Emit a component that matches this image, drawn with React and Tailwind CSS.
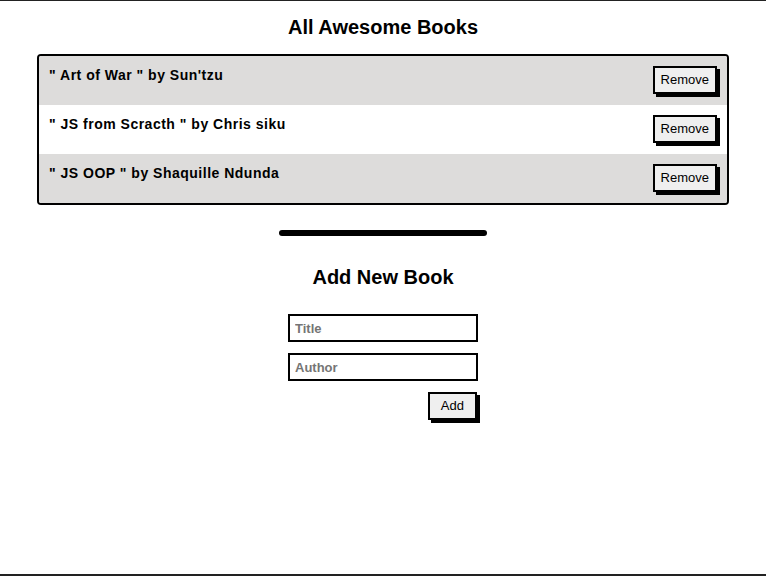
import React from "react";

const books = [
  { title: "Art of War", author: "Sun'tzu" },
  { title: "JS from Scracth", author: "Chris siku" },
  { title: "JS OOP", author: "Shaquille Ndunda" },
];

const BookRow = ({ title, author, index }) => (
  <li
    className={`flex justify-between items-start h-[49px] pl-[10px] pr-[10px] ${
      index % 2 === 0 ? "bg-[#dddcdb]" : "bg-white"
    }`}
  >
    <p className="mt-[11px] text-[14px] leading-[16px] font-bold tracking-[0.5px]">
      " {title} " by {author}
    </p>
    <button className="mt-[10px] border-2 border-black bg-[#efefef] px-[6px] h-[28px] text-[13px] shadow-[3px_3px_0_#000]">
      Remove
    </button>
  </li>
);

export default function App() {
  return (
    <div
      className="min-h-[576px] flex flex-col items-center border-t border-[#222] border-b-2 border-b-[#222] text-black"
      style={{ fontFamily: '"Liberation Sans", Arial, sans-serif' }}
    >
      <h1 className="mt-[14px] text-[20px] leading-[24px] font-bold">
        All Awesome Books
      </h1>
      <ul className="mt-[15px] w-[692px] border-2 border-black rounded-[4px] overflow-hidden">
        {books.map((b, i) => (
          <BookRow key={b.title} {...b} index={i} />
        ))}
      </ul>
      <div className="mt-[25px] w-[208px] h-[6px] rounded-full bg-black" />
      <h2 className="mt-[29px] text-[20px] leading-[24px] font-bold">
        Add New Book
      </h2>
      <form className="mt-[25px] w-[190px] flex flex-col items-end gap-[11px]">
        <input
          placeholder="Title"
          className="w-full h-[28px] border-2 border-black px-[5px] text-[13px] font-bold placeholder:text-[#757575] outline-none"
        />
        <input
          placeholder="Author"
          className="w-full h-[28px] border-2 border-black px-[5px] text-[13px] font-bold placeholder:text-[#757575] outline-none"
        />
        <button
          type="button"
          className="mr-[1px] border-2 border-black bg-[#efefef] px-[11px] h-[28px] text-[13px] shadow-[3px_3px_0_#000]"
        >
          Add
        </button>
      </form>
    </div>
  );
}
